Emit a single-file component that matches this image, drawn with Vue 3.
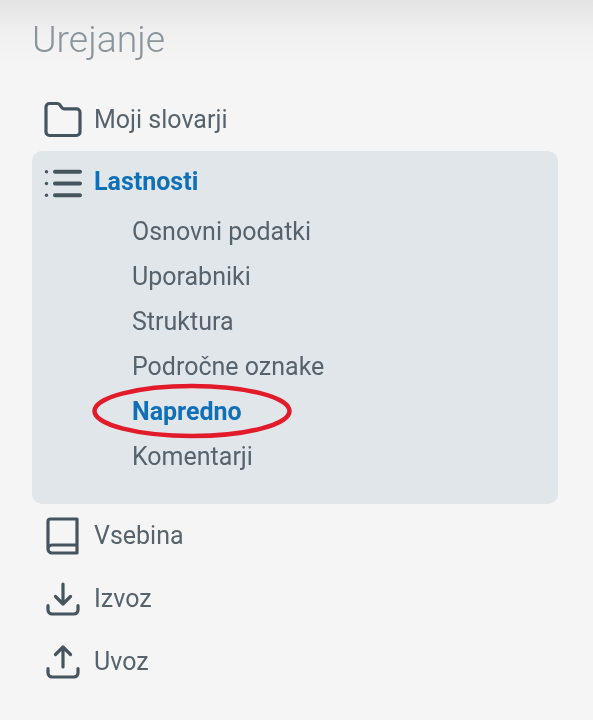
<template>
  <div class="page">
    <h2 class="title">Urejanje</h2>

    <div class="menu">
      <div class="item">
        <svg class="icon" viewBox="0 0 38 38" fill="none">
          <path d="M2 6a3.500 3.500 0 0 1 3.500-3.500h7.800a3 3 0 0 1 2.300 1.100l2.400 3.200a3 3 0 0 0 2.300 1.100h12.200a3.500 3.500 0 0 1 3.500 3.500v19.600a3.500 3.500 0 0 1-3.500 3.500h-27a3.500 3.500 0 0 1-3.500-3.500z" />
        </svg>
        <span>Moji slovarji</span>
      </div>

      <div class="panel">
        <div class="item active">
          <svg class="icon" viewBox="0 0 38 38" fill="none">
            <path d="M11 9.700h25M11 21.500h25M11 33.200h25" class="thick" />
            <circle cx="2.500" cy="9.700" r="1.700" class="dot" />
            <circle cx="2.500" cy="21.500" r="1.700" class="dot" />
            <circle cx="2.500" cy="33.200" r="1.700" class="dot" />
          </svg>
          <span>Lastnosti</span>
        </div>
        <div class="sub-list">
          <div
            v-for="sub in subItems"
            :key="sub"
            class="sub-item"
            :class="{ selected: sub === 'Napredno' }"
          >
            {{ sub }}
          </div>
        </div>
        <!-- Red marker round the selected entry -->
        <svg class="marker" viewBox="0 0 200 56" fill="none">
          <ellipse cx="100" cy="28" rx="97.500" ry="25" />
        </svg>
      </div>

      <div class="item">
        <svg class="icon" viewBox="0 0 38 38" fill="none">
          <path d="M4 32V4.500A2.500 2.500 0 0 1 6.500 2H33v34H8a4 4 0 0 1-4-4a4 4 0 0 1 4-4h25" />
        </svg>
        <span>Vsebina</span>
      </div>
      <div class="item">
        <svg class="icon" viewBox="0 0 38 38" fill="none">
          <path d="M19 4v20M11.500 16.500L19 24l7.500-7.500M4 25.500v4.500a4 4 0 0 0 4 4h22a4 4 0 0 0 4-4v-4.500" />
        </svg>
        <span>Izvoz</span>
      </div>
      <div class="item">
        <svg class="icon" viewBox="0 0 38 38" fill="none">
          <path d="M19 24V4M11.500 11.500L19 4l7.500 7.500M4 25.500v4.500a4 4 0 0 0 4 4h22a4 4 0 0 0 4-4v-4.500" />
        </svg>
        <span>Uvoz</span>
      </div>
    </div>
  </div>
</template>

<script setup>
const subItems = [
  'Osnovni podatki',
  'Uporabniki',
  'Struktura',
  'Področne oznake',
  'Napredno',
  'Komentarji'
]
</script>

<style scoped>
.page {
  width: 593px;
  height: 720px;
  box-sizing: border-box;
  padding: 17px 35px 0 32px;
  overflow: hidden;
  font-family: Roboto, 'Liberation Sans', sans-serif;
  background: linear-gradient(to bottom, #e3e3e3 0, #f0f0f0 32px, #f5f5f5 65px);
}

.title {
  margin: 0 0 27px;
  font-size: 37.400px;
  line-height: 44px;
  font-weight: 300;
  color: #87959d;
  filter: blur(0.4px);
}

.menu {
  display: flex;
  flex-direction: column;
  filter: blur(0.4px);
}

.item {
  display: flex;
  align-items: center;
  gap: 12px;
  height: 63px;
  padding-left: 12px;
  font-size: 25px;
  color: #56636c;
}

.icon {
  flex: none;
  width: 38px;
  height: 38px;
}

.icon path {
  stroke: #455560;
  stroke-width: 3.200;
  stroke-linecap: round;
  stroke-linejoin: round;
}

.icon path.thick {
  stroke-width: 4;
}

.icon .dot {
  fill: #455560;
}

.panel {
  position: relative;
  height: 353px;
  border-radius: 10px;
  background: #e1e6ea;
}

.active {
  height: 60px;
  font-weight: 700;
  color: #0f70b7;
}

.sub-list {
  display: flex;
  flex-direction: column;
  margin-top: -2px;
  padding-left: 100px;
}

.sub-item {
  height: 45px;
  line-height: 45px;
  font-size: 25px;
  color: #56636c;
}

.sub-item.selected {
  font-weight: 700;
  color: #0f70b7;
}

.marker {
  position: absolute;
  left: 60px;
  top: 232px;
  width: 200px;
  height: 56px;
}

.marker ellipse {
  stroke: #e11b2a;
  stroke-width: 4.500;
}
</style>
